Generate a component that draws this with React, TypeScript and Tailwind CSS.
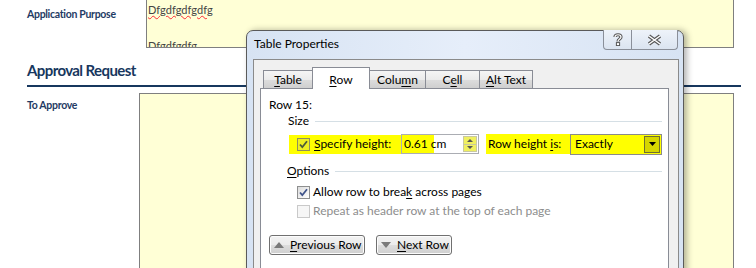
import React from 'react';

// Small win7-style checkbox
function CheckBox({ checked, disabled, highlight }: { checked?: boolean; disabled?: boolean; highlight?: boolean }) {
  const box = disabled
    ? 'border-[#c9c9c9] bg-[#f6f6f6]'
    : highlight
      ? 'border-[#8e8f5f] bg-[#eeee22]'
      : 'border-[#8e8f8f] bg-[linear-gradient(135deg,#dcdcdc,#ffffff)]';
  return (
    <span className={`flex h-[13px] w-[13px] shrink-0 items-center justify-center border ${box}`}>
      {checked && (
        <svg width="11" height="11" viewBox="0 0 11 11">
          <path d="M2 5.5 L4.3 8.2 L9 2.2" fill="none" stroke={highlight ? '#4b5a3a' : '#3f538a'} strokeWidth="1.8" />
        </svg>
      )}
    </span>
  );
}

function Tab({ label, u, w, active }: { label: string; u: number; w: string; active?: boolean }) {
  const parts = (
    <>
      {label.slice(0, u)}
      <span className="underline underline-offset-2">{label[u]}</span>
      {label.slice(u + 1)}
    </>
  );
  if (active) {
    return (
      <div className={`relative z-10 -ml-px h-[22px] ${w} border border-b-0 border-[#898c95] bg-white pt-[4px] text-center leading-[16px]`}>
        {parts}
      </div>
    );
  }
  return (
    <div className={`-ml-px h-[19px] ${w} border border-[#898c95] bg-[linear-gradient(#f5f5f5,#ebebeb_50%,#dddddd_51%,#cfcfcf)] pt-[1px] text-center leading-[16px] first:ml-0`}>
      {parts}
    </div>
  );
}

function NavButton({ label, up, w }: { label: string; up?: boolean; w: string }) {
  return (
    <div className={`flex h-[20px] ${w} items-center rounded-[3px] border border-[#707070] bg-[linear-gradient(#f2f2f2,#ebebeb_50%,#dddddd_51%,#cfcfcf)] pl-[4px] shadow-[inset_0_0_0_1px_#fcfcfc]`}>
      <svg width="10" height="6" viewBox="0 0 10 6" className="mr-[6px]">
        {up ? <path d="M0 6 L5 0 L10 6 Z" fill="#7a7a7a" /> : <path d="M0 0 L5 6 L10 0 Z" fill="#7a7a7a" />}
      </svg>
      <span>
        <span className="underline underline-offset-2">{label[0]}</span>
        {label.slice(1)}
      </span>
    </div>
  );
}

export default function App() {
  return (
    <div className="relative h-[268px] w-[756px] overflow-hidden bg-white font-['Lato',sans-serif]">
      {/* form behind the dialog */}
      <div className="pl-[27px]">
        <div className="flex h-[48px]">
          <div className="w-[119px] pt-[7px] text-[10.5px] font-bold leading-[14px] tracking-[-0.3px] text-[#1f3b64]">Application Purpose</div>
          <div className="-mt-px w-[588px] overflow-hidden border border-[#7f7f7f] bg-[#ffffd6] px-[1px] text-[11px] leading-[13px] text-[#444]">
            <div className="pt-[3px]">
              <span className="underline decoration-red-500 decoration-wavy decoration-1">Dfgdfgdfgdfg</span>
            </div>
            <div className="mt-[23px]">Dfgdfgdfg</div>
          </div>
        </div>
        <div className="mt-[12px] w-[714px] border-b-2 border-[#17375e] pb-[5px] text-[15px] font-bold leading-[20px] tracking-[-0.6px] text-[#17375e]">
          Approval Request
        </div>
        <div className="mt-[6px] flex">
          <div className="w-[112px] pt-[5px] text-[10.5px] font-bold leading-[14px] tracking-[-0.3px] text-[#1f3b64]">To Approve</div>
          <div className="h-[200px] w-[595px] border border-[#7f7f7f] bg-[#ffffd6]" />
        </div>
      </div>

      {/* Table Properties dialog */}
      <div className="absolute left-[246px] top-[30px] flex h-[250px] w-[438px] flex-col rounded-t-[7px] border border-[#5a5a5a] bg-[linear-gradient(90deg,#d7e3f3,#e6eefa_50%,#d7e3f3)] text-[12px] text-black shadow-[3px_0_6px_rgba(0,0,0,0.3)]">
        <div className="flex h-[28px] shrink-0 items-start justify-between">
          <div className="pl-[7px] pt-[5px] leading-[16px]">Table Properties</div>
          <div className="-mt-px mr-[5px] flex h-[20px]">
            <div className="flex w-[29px] items-center justify-center rounded-bl-[4px] border border-t-0 border-[#8a8f99] bg-[linear-gradient(#eef3fa,#dbe4f0)]">
              <svg width="10" height="13" viewBox="0 0 10 13">
                <path d="M2 4 C2 1 8 1 8 4 C8 6 5 6 5 8.5" fill="none" stroke="#555" strokeWidth="3.2" />
                <path d="M2 4 C2 1 8 1 8 4 C8 6 5 6 5 8.5" fill="none" stroke="#fff" strokeWidth="1.2" />
                <rect x="3.4" y="9.6" width="3.2" height="3" fill="#fff" stroke="#555" strokeWidth="1" />
              </svg>
            </div>
            <div className="-ml-px flex w-[47px] items-center justify-center rounded-br-[4px] border border-t-0 border-[#8a8f99] bg-[linear-gradient(#eef3fa,#dbe4f0)]">
              <svg width="17" height="12" viewBox="0 0 17 12">
                <path d="M3 2 L14 10 M14 2 L3 10" fill="none" stroke="#555" strokeWidth="3.6" />
                <path d="M3 2 L14 10 M14 2 L3 10" fill="none" stroke="#fff" strokeWidth="1.5" />
              </svg>
            </div>
          </div>
        </div>

        <div className="ml-[6px] mr-[4px] flex flex-1 flex-col border border-[#8a8a8a] bg-[#f0f0f0] pl-[6px] pr-[9px] pt-[7px]">
          <div className="flex h-[22px] items-end pl-[3px]">
            <Tab label="Table" u={0} w="w-[50px]" />
            <Tab label="Row" u={0} w="w-[58px]" active />
            <Tab label="Column" u={4} w="w-[57px]" />
            <Tab label="Cell" u={1} w="w-[55px]" />
            <Tab label="Alt Text" u={0} w="w-[54px]" />
          </div>

          <div className="-mt-px flex flex-1 flex-col border border-[#898c95] bg-white pr-[6px]">
            <div className="ml-[8px] mt-[8px] h-[16px] leading-[16px]">Row 15:</div>

            <div className="ml-[27px] flex h-[16px] items-center leading-[16px]">
              <span>Size</span>
              <span className="ml-[6px] h-px flex-1 bg-[#d5dfe5]" />
            </div>

            <div className="ml-[28px] mt-[5px] flex h-[20px] items-center">
              <div className="flex h-[19px] w-[112px] items-center bg-[#ffff00] pl-[8px]">
                <CheckBox checked highlight />
                <span className="ml-[4px]">
                  <span className="underline underline-offset-2">S</span>pecify height:
                </span>
              </div>
              <div className="flex h-[20px] w-[78px] items-center border border-[#abadb3] bg-[linear-gradient(90deg,#ffff00_32px,#ffffff_32px)] pl-[2px]">
                <span className="flex-1">0.61 cm</span>
                <div className="mr-[1px] flex h-[16px] w-[14px] flex-col border border-[#c9c9a0] bg-[#f0f060]">
                  <div className="flex flex-1 items-center justify-center border-b border-[#c9c9a0]">
                    <svg width="6" height="3" viewBox="0 0 6 3"><path d="M0 3 L3 0 L6 3 Z" fill="#555" /></svg>
                  </div>
                  <div className="flex flex-1 items-center justify-center">
                    <svg width="6" height="3" viewBox="0 0 6 3"><path d="M0 0 L3 3 L6 0 Z" fill="#555" /></svg>
                  </div>
                </div>
              </div>
              <div className="ml-[7px] flex h-[20px] items-center bg-[#ffff00] pl-[2px]">
                <span className="w-[82px]">
                  Row height <span className="underline underline-offset-2">i</span>s:
                </span>
                <div className="flex h-[21px] w-[92px] items-center border border-[#8a8a8a] pl-[4px]">
                  <span className="flex-1">Exactly</span>
                  <div className="mr-px flex h-[17px] w-[16px] items-center justify-center border border-[#6f6f30] bg-[#d6d600]">
                    <svg width="7" height="4" viewBox="0 0 7 4"><path d="M0 0 L3.5 4 L7 0 Z" fill="#000" /></svg>
                  </div>
                </div>
              </div>
            </div>

            <div className="ml-[26px] mt-[9px] flex h-[16px] items-center leading-[16px]">
              <span>
                <span className="underline underline-offset-2">O</span>ptions
              </span>
              <span className="ml-[6px] h-px flex-1 bg-[#d5dfe5]" />
            </div>

            <div className="ml-[36px] mt-[5px] flex h-[16px] items-center leading-[16px]">
              <CheckBox checked />
              <span className="ml-[3px]">
                Allow row to brea<span className="underline underline-offset-2">k</span> across pages
              </span>
            </div>

            <div className="ml-[36px] mt-[3px] flex h-[16px] items-center leading-[16px] text-[#8d8d8d]">
              <CheckBox disabled />
              <span className="ml-[3px]">Repeat as header row at the top of each page</span>
            </div>

            <div className="ml-[8px] mt-[16px] flex gap-[11px]">
              <NavButton label="Previous Row" up w="w-[96px]" />
              <NavButton label="Next Row" w="w-[76px]" />
            </div>
          </div>
        </div>
      </div>
    </div>
  );
}
